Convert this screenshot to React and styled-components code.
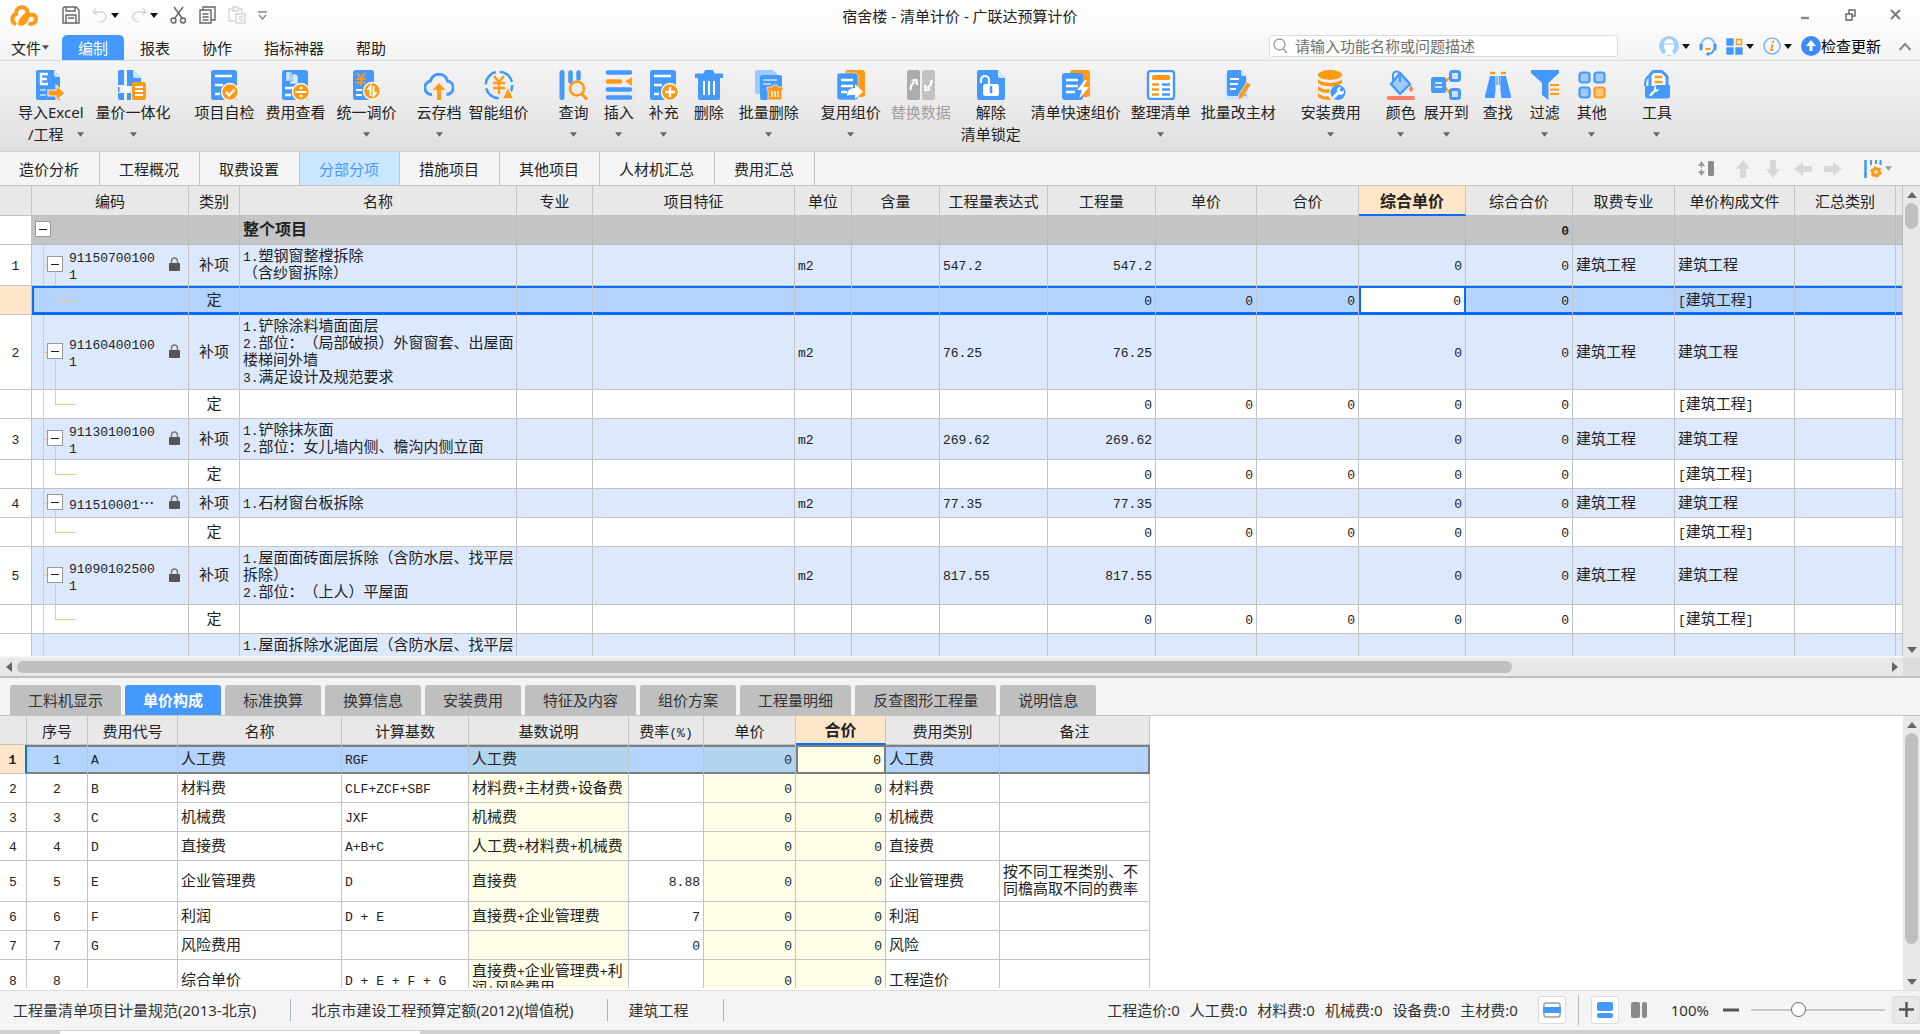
import React from 'react';
import styled, { createGlobalStyle, css } from 'styled-components';

const BLUE = '#4499ff';
const ORANGE = '#ff9a17';
const LINE = '#c4c4c4';
const UI_FONT = '"Noto Sans", "Noto Sans CJK SC", sans-serif';
const GRID_FONT = '"Noto Sans CJK SC", sans-serif';

// ---------- 图标 ----------

const ribbonIcons = {
  importExcel: (
    <>
      <path d='M2 0h16l6 7v23H2a2 2 0 0 1-2-2V2a2 2 0 0 1 2-2z' fill={BLUE} />
      <path d='M18 0v5a2 2 0 0 0 2 2h4z' fill='#cfe5ff' />
      <path d='M12 4H5v10h7M5 9h6' stroke='#fff' strokeWidth='2.4' fill='none' />
      <path d='M4 20h6M4 25h6' stroke='#a9d0ff' strokeWidth='2' />
      <path d='M12 20h8v-5l9 8-9 8v-5h-8z' fill={ORANGE} stroke='#eee' strokeWidth='1.2' />
    </>
  ),
  integrate: (
    <>
      <path d='M2 0h4v15H0V2a2 2 0 0 1 2-2zM9 0h6l8 8v5h-8v3H9z' fill={BLUE} />
      <path d='M15 0v6a2 2 0 0 0 2 2h6z' fill='#cfe5ff' />
      <path d='M0 23h6v7H2a2 2 0 0 1-2-2zM9 23h4v7H9z' fill={BLUE} />
      <path d='M5 17h6v6H5z' fill='#fff' />
      <path d='M0 17v5' stroke={BLUE} strokeWidth='3' />
      <rect x='14' y='12' width='14' height='18' rx='2' fill={ORANGE} />
      <path d='M17 17h8M17 21h8M17 25h8' stroke='#fff' strokeWidth='2' />
    </>
  ),
  check: (
    <>
      <rect x='1' width='26' height='30' rx='2.5' fill={BLUE} />
      <path d='M5 6h17M5 15h8M5 24h5' stroke='#fff' strokeWidth='2.4' />
      <circle cx='20' cy='22' r='8.5' fill={ORANGE} stroke='#fff' strokeWidth='1.4' />
      <path d='M16 22l3 3.5 5.5-6' stroke='#fff' strokeWidth='2.4' fill='none' />
    </>
  ),
  feeView: (
    <>
      <rect x='1' width='26' height='30' rx='2.5' fill={BLUE} />
      <path d='M5 2h6v9H5zM9 4h6l2 2v8H9z' fill='#d8eaff' stroke={BLUE} strokeWidth='.6' />
      <path d='M4 18h8M4 25h6' stroke='#fff' strokeWidth='2.4' />
      <circle cx='20' cy='22' r='8.5' fill={ORANGE} stroke='#fff' strokeWidth='1.4' />
      <path d='M14.5 22h11' stroke='#fff' strokeWidth='2' />
      <circle cx='20' cy='18' r='1.5' fill='#fff' />
      <circle cx='20' cy='26' r='1.5' fill='#fff' />
    </>
  ),
  adjust: (
    <>
      <rect x='1' width='21' height='30' rx='2.5' fill={BLUE} />
      <path d='M5 3l4 5 4-5M9 8v8M4.500 9h9M4.500 12.500h9' stroke={ORANGE} strokeWidth='1.8' fill='none' />
      <path d='M4 20h6M4 25h6' stroke='#fff' strokeWidth='2.2' />
      <circle cx='20' cy='21' r='8.5' fill={ORANGE} stroke='#fff' strokeWidth='1.4' />
      <path d='M18.500 26v-10l-3 4M21.500 16v10l3-4' stroke='#fff' strokeWidth='1.9' fill='none' />
    </>
  ),
  cloud: (
    <>
      <path
        d='M8 24.500A6.800 6.800 0 0 1 6.500 11 8.700 8.700 0 0 1 23.500 11 6.800 6.800 0 0 1 22.500 24.500'
        stroke={BLUE}
        strokeWidth='3'
        fill='none'
      />
      <path d='M15 13l6.500 7h-4.500v10h-4V20H8.500z' fill={ORANGE} />
    </>
  ),
  smart: (
    <>
      <circle cx='15' cy='15' r='13.300' stroke={BLUE} strokeWidth='2.600' fill='none' strokeDasharray='17 4' />
      <path d='M10 6l5 6 5-6M15 12v12M9 13h12M9 18h12' stroke={ORANGE} strokeWidth='2.400' fill='none' />
      <path d='M24 17l6 12H18z' fill={ORANGE} stroke='#eee' strokeWidth='1.500' />
    </>
  ),
  query: (
    <>
      <path d='M3 2.500v25' stroke={BLUE} strokeWidth='5' strokeLinecap='round' />
      <path d='M11.500 2.500v9M19.500 2.500v6' stroke={BLUE} strokeWidth='4.500' strokeLinecap='round' />
      <circle cx='18' cy='18.500' r='7' stroke={ORANGE} strokeWidth='2.600' fill='#ececec' />
      <path d='M22.500 23.500l5.500 6' stroke={ORANGE} strokeWidth='3' />
    </>
  ),
  insert: (
    <>
      <path d='M4 2.500h22M4 19.500h22M4 27.500h22' stroke={BLUE} strokeWidth='4.600' strokeLinecap='round' />
      <path d='M4 11.500h12' stroke={ORANGE} strokeWidth='4.400' strokeLinecap='round' />
      <path d='M28 7v9l-7-4.500z' fill={ORANGE} />
    </>
  ),
  supplement: (
    <>
      <rect x='1' width='26' height='30' rx='2.500' fill={BLUE} />
      <path d='M5 6h17M5 15h8M5 24h5' stroke='#fff' strokeWidth='2.400' />
      <circle cx='21' cy='22' r='8.500' fill={ORANGE} stroke='#fff' strokeWidth='1.400' />
      <path d='M16 22h10M21 17v10' stroke='#fff' strokeWidth='2.400' />
    </>
  ),
  remove: (
    <>
      <path d='M1 3.500h8.500L11 0h8l1.500 3.500H29v4.500H1z' fill={BLUE} />
      <path d='M4 8h22v20a2 2 0 0 1-2 2H6a2 2 0 0 1-2-2z' fill={BLUE} />
      <path d='M10 11v14M15 11v14M20 11v14' stroke='#fff' strokeWidth='2' />
    </>
  ),
  batchRemove: (
    <>
      <path d='M3 0h16l4 4v20H3a2 2 0 0 1-2-2V2a2 2 0 0 1 2-2z' fill='#9fcaff' />
      <rect x='6' y='5' width='22' height='25' rx='2.500' fill={BLUE} />
      <path d='M9 10h14M9 14h8' stroke='#a9d0ff' strokeWidth='1.800' />
      <path d='M13 17h5l1-2h4l1 2h5v3h-1v10H14V20h-1z' fill={ORANGE} stroke='#eee' strokeWidth='.8' />
      <path d='M18 21v6M21 21v6M24 21v6' stroke='#fff' strokeWidth='1.300' />
    </>
  ),
  reuse: (
    <>
      <rect x='9' width='20' height='27' rx='3' fill={ORANGE} />
      <rect x='1' y='3' width='21' height='27' rx='3' fill={BLUE} stroke='#eee' strokeWidth='.6' />
      <path d='M5 10h12M5 16h12M5 22h6' stroke='#fff' strokeWidth='2.400' />
      <path d='M11 26c0-6 3-8 8-8v-4l8 7.500-8 7.500v-4c-3 0-6-.500-8 1z' fill='#fff' />
    </>
  ),
  replace: (
    <>
      <rect x='1' width='13' height='30' rx='2.500' fill='#acacac' />
      <rect x='16' width='13' height='30' rx='2.500' fill='#c2c2c2' />
      <path
        d='M4.500 20c0-4 1-6 4-8M5.500 10.500l5-.500.500 5M25.500 10c0 4-1 6-4 8M24.500 19.500l-5 .500-.500-5'
        stroke='#fff'
        strokeWidth='2.200'
        fill='none'
      />
    </>
  ),
  unlock: (
    <>
      <path d='M3 0h19l7 8v20a2 2 0 0 1-2 2H3a2 2 0 0 1-2-2V2a2 2 0 0 1 2-2z' fill={BLUE} />
      <path d='M22 0v6a2 2 0 0 0 2 2h5z' fill='#d8eaff' />
      <path d='M5 13v-3a4 4 0 0 1 8 0v5' stroke='#fff' strokeWidth='2.200' fill='none' />
      <rect x='7' y='14' width='16' height='12' rx='2.500' fill='#fff' />
      <path d='M15 17v5' stroke={BLUE} strokeWidth='2.600' strokeLinecap='round' />
    </>
  ),
  quick: (
    <>
      <rect x='9' width='20' height='27' rx='3' fill={ORANGE} />
      <rect x='1' y='3' width='21' height='27' rx='3' fill={BLUE} />
      <path d='M5 10h12M5 16h12M5 22h9' stroke='#fff' strokeWidth='2.400' />
      <path d='M24 10l-8 10h5l-3 9 10-12h-6l4-7z' fill='#fff' />
    </>
  ),
  arrange: (
    <>
      <rect x='2' y='1' width='26' height='28' rx='2.500' stroke={BLUE} strokeWidth='2.400' fill='#fff' />
      <rect x='6' y='5' width='18' height='5' rx='1.500' fill={ORANGE} />
      <path d='M6 14.500h7M6 19.500h7M6 24.500h7' stroke={ORANGE} strokeWidth='2.600' />
      <path d='M16 14.500h8M16 19.500h8M16 24.500h8' stroke={BLUE} strokeWidth='2.600' />
    </>
  ),
  material: (
    <>
      <path d='M2 4v24a2 2 0 0 0 2 2h17l4-3V8z' fill='#cfe5ff' />
      <path d='M6 0h12l5 6v20H6a2 2 0 0 1-2-2V2a2 2 0 0 1 2-2z' fill={BLUE} />
      <path d='M18 0v4a2 2 0 0 0 2 2h3z' fill='#cfe5ff' />
      <path d='M7 9h9M7 14h8M7 19h6' stroke='#fff' strokeWidth='2' />
      <path d='M24 12l4 2.500L19.500 28l-4.500 2 .5-5z' fill={ORANGE} stroke='#eee' strokeWidth='.8' />
    </>
  ),
  install: (
    <>
      <ellipse cx='14' cy='5' rx='12' ry='5' fill={ORANGE} />
      <path
        d='M2 9c4 5 20 5 24 0v4c-4 5-20 4-24 0zM2 16c3 3 8 4 12 3l-1 4c-5 0-9-1-11-3zM2 23c3 3 7 4 10 3l3 4C9 30 4 29 2 27z'
        fill={ORANGE}
      />
      <circle cx='22' cy='22.500' r='7.500' fill={BLUE} />
      <path d='M18 27l4.500-4.500' stroke='#fff' strokeWidth='3' strokeLinecap='round' />
      <path d='M21 21a3.500 3.500 0 0 1 4-4l-1.500 3 2.500 2 2-2a4 4 0 0 1-4 5z' fill='#fff' />
    </>
  ),
  color: (
    <>
      <path d='M14 3l10 11-10 10L5 14z' fill='#9fcaff' stroke={BLUE} strokeWidth='2.400' strokeLinejoin='round' />
      <path d='M7 11V5a3.500 3.500 0 0 1 7 0v7' stroke={BLUE} strokeWidth='2' fill='none' />
      <path d='M25 15c1.500 2.500 2 3.500 2 4.500a2 2 0 0 1-4 0c0-1 .5-2 2-4.500z' fill='#fb8064' />
      <rect x='1' y='26' width='28' height='4' rx='1.500' fill='#fb8064' />
    </>
  ),
  expand: (
    <>
      <path d='M13 13l6-6M13 16l6 7' stroke={ORANGE} strokeWidth='2' />
      <rect x='0' y='7' width='15' height='16' rx='2.500' fill={BLUE} />
      <path d='M4 13h7M4 17h7' stroke='#cfe5ff' strokeWidth='1.800' />
      <rect x='19.500' y='1.500' width='9' height='9' rx='2' fill='#cfe5ff' stroke={BLUE} strokeWidth='3' />
      <rect x='19.500' y='19.500' width='9' height='9' rx='2' fill='#cfe5ff' stroke={BLUE} strokeWidth='3' />
    </>
  ),
  find: (
    <>
      <path d='M7 3h5M18 3h5' stroke={ORANGE} strokeWidth='2.400' />
      <path d='M7 6h5.500v15l-1 7H3c-1 0-1.500-1-1-2zM23 6h-5.500v15l1 7H27c1 0 1.500-1 1-2z' fill={BLUE} />
      <path d='M14 6v9M16.500 6v9' stroke={BLUE} strokeWidth='1.200' />
    </>
  ),
  filter: (
    <>
      <path d='M1 0h28v3L18.500 13v17L12 25V13L1 3z' fill={BLUE} />
      <path d='M20 15h9M20 19.500h9M20 24h9' stroke={ORANGE} strokeWidth='2.200' />
    </>
  ),
  other: (
    <>
      <rect x='2.500' y='2.500' width='10' height='10' rx='2.500' fill='#9fcaff' stroke={BLUE} strokeWidth='2.200' />
      <rect x='17.500' y='2.500' width='10' height='10' rx='2.500' fill='#9fcaff' stroke={BLUE} strokeWidth='2.200' />
      <rect x='2.500' y='17.500' width='10' height='10' rx='2.500' fill='#9fcaff' stroke={BLUE} strokeWidth='2.200' />
      <rect x='17.500' y='17.500' width='10' height='10' rx='2.500' fill='#ffc67c' stroke={ORANGE} strokeWidth='2.200' />
    </>
  ),
  tool: (
    <>
      <path d='M11 1.500h9l5 5V18H8V5z' fill='#fff' stroke={BLUE} strokeWidth='3' strokeLinejoin='round' />
      <path d='M12.500 7h8M12.500 12h8' stroke={ORANGE} strokeWidth='2.400' />
      <path d='M7 6C3 8 3 12 3 16' stroke={BLUE} strokeWidth='2' fill='none' />
      <path d='M3 16h9l3-1h13v11a2.500 2.500 0 0 1-2.500 2.500h-20A2.500 2.500 0 0 1 3 26z' fill={BLUE} />
      <path d='M7 25l5-5a3 3 0 0 1 2-4v3l2 1 1-2a3.500 3.500 0 0 1-4 4l-4 4.500z' fill='#fff' />
    </>
  ),
};

const Caret = ({ color = '#111', size = 8 }) => (
  <svg width={size} height='5' viewBox='0 0 8 5' aria-hidden='true'>
    <path d='M0 0h8L4 5z' fill={color} />
  </svg>
);

const Logo = () => (
  <svg width='28' height='21' viewBox='0 0 28 21' aria-hidden='true'>
    <path
      d='M4.500 18.500a5.500 5.500 0 0 1 1.500-9.500C5.500 1 16 0 17.500 6.500c1 4-6.500 5-7.500 12M12 18.500c4-1 4.500-4 5-6 1-4 9-4 9 1.500 0 3-2.500 5-6 5'
      stroke={ORANGE}
      strokeWidth='4'
      fill='none'
      strokeLinecap='round'
    />
  </svg>
);

const LockIcon = () => (
  <svg width='11' height='14' viewBox='0 0 11 14' aria-hidden='true'>
    <path d='M2.500 7V4a3 3 0 0 1 6 0v3' stroke='#777' strokeWidth='1.400' fill='none' />
    <rect y='6' width='11' height='8' rx='1' fill='#555' />
  </svg>
);

const QuickIcon = ({ name, width }) => (
  <svg
    width={width}
    height='18'
    viewBox={`0 0 ${width} 18`}
    fill='none'
    stroke='#666'
    strokeWidth='1.400'
    aria-hidden='true'
  >
    {name === 'save' && <path d='M1 3a2 2 0 0 1 2-2h11l3 3v13H1zM4 1v4h9V1M4 17V9h10v8M6 12h6' />}
    {name === 'undo' && <path d='M4 2L1 6l4 3M1 6h8c7 0 7 9-1 10' stroke='#d5d5d5' />}
    {name === 'redo' && <path d='M12 2l3 4-4 3M15 6H7C0 6 0 15 8 16' stroke='#d5d5d5' />}
    {name === 'cut' && (
      <>
        <path d='M4 1l8 11M13 1L5 12' />
        <circle cx='3.500' cy='14.500' r='2.500' />
        <circle cx='13' cy='14.500' r='2.500' />
      </>
    )}
    {name === 'copy' && <path d='M1 4h11v13H1zM4 4V1h12v13h-4M3.500 8h6M3.500 11h6M3.500 14h6' />}
    {name === 'paste' && <path d='M8 15H1V3h3M11 3h3v4M5 1h5v4H5zM8 8h9v9H8zM11 11h4M11 14h4' stroke='#d5d5d5' />}
    {name === 'more' && <path d='M0 6h9M1 9l3.500 4L8 9' stroke='#888' />}
  </svg>
);

const ArrowIcon = ({ turn }) => (
  <svg width='20' height='20' viewBox='0 0 20 20' aria-hidden='true'>
    <path d='M10 1l7 9h-4v9H7v-9H3z' fill='#d8d8d8' transform={`rotate(${turn} 10 10)`} />
  </svg>
);

// ---------- 数据 ----------

const ribbonGroups = [
  {
    gap: 12,
    items: [
      { icon: 'importExcel', label: '导入Excel', second: '/工程', drop: true },
      { icon: 'integrate', label: '量价一体化', drop: true },
    ],
  },
  {
    before: 24,
    gap: 11,
    items: [
      { icon: 'check', label: '项目自检' },
      { icon: 'feeView', label: '费用查看' },
      { icon: 'adjust', label: '统一调价', drop: true },
    ],
  },
  {
    before: 20,
    gap: 7,
    items: [
      { icon: 'cloud', label: '云存档', drop: true },
      { icon: 'smart', label: '智能组价' },
    ],
  },
  {
    before: 30,
    gap: 15,
    items: [
      { icon: 'query', label: '查询', drop: true },
      { icon: 'insert', label: '插入', drop: true },
      { icon: 'supplement', label: '补充', drop: true },
      { icon: 'remove', label: '删除' },
      { icon: 'batchRemove', label: '批量删除', drop: true },
    ],
  },
  {
    before: 22,
    gap: 10,
    items: [
      { icon: 'reuse', label: '复用组价', drop: true },
      { icon: 'replace', label: '替换数据', disabled: true },
      { icon: 'unlock', label: '解除', second: '清单锁定' },
      { icon: 'quick', label: '清单快速组价' },
      { icon: 'arrange', label: '整理清单', drop: true },
      { icon: 'material', label: '批量改主材' },
    ],
  },
  { before: 25, items: [{ icon: 'install', label: '安装费用', drop: true }] },
  {
    before: 25,
    gap: 8,
    items: [
      { icon: 'color', label: '颜色', drop: true },
      { icon: 'expand', label: '展开到', drop: true },
    ],
  },
  {
    before: 14,
    gap: 17,
    items: [
      { icon: 'find', label: '查找' },
      { icon: 'filter', label: '过滤', drop: true },
      { icon: 'other', label: '其他', drop: true },
    ],
  },
  { before: 35, items: [{ icon: 'tool', label: '工具', drop: true }] },
];

const menus = ['编制', '报表', '协作', '指标神器', '帮助'];
const sections = ['造价分析', '工程概况', '取费设置', '分部分项', '措施项目', '其他项目', '人材机汇总', '费用汇总'];

const mainColumns = [
  { width: 32, title: '' },
  { width: 157, title: '编码' },
  { width: 51, title: '类别' },
  { width: 277, title: '名称' },
  { width: 76, title: '专业' },
  { width: 202, title: '项目特征' },
  { width: 57, title: '单位' },
  { width: 88, title: '含量' },
  { width: 108, title: '工程量表达式' },
  { width: 108, title: '工程量' },
  { width: 101, title: '单价' },
  { width: 102, title: '合价' },
  { width: 107, title: '综合单价', active: true },
  { width: 107, title: '综合合价' },
  { width: 102, title: '取费专业' },
  { width: 120, title: '单价构成文件' },
  { width: 101, title: '汇总类别' },
  { title: '' },
];

const mainItems = [
  { code: '91150700100\n1', name: '1.塑钢窗整樘拆除\n（含纱窗拆除）', amount: '547.2', selected: true },
  {
    code: '91160400100\n1',
    name: '1.铲除涂料墙面面层\n2.部位：（局部破损）外窗窗套、出屋面\n楼梯间外墙\n3.满足设计及规范要求',
    amount: '76.25',
  },
  { code: '91130100100\n1', name: '1.铲除抹灰面\n2.部位：女儿墙内侧、檐沟内侧立面', amount: '269.62' },
  { code: '911510001…', name: '1.石材窗台板拆除', amount: '77.35' },
  {
    code: '91090102500\n1',
    name: '1.屋面面砖面层拆除（含防水层、找平层\n拆除）\n2.部位：（上人）平屋面',
    amount: '817.55',
  },
];

const detailTabs = [
  '工料机显示',
  '单价构成',
  '标准换算',
  '换算信息',
  '安装费用',
  '特征及内容',
  '组价方案',
  '工程量明细',
  '反查图形工程量',
  '说明信息',
];

const feeColumns = [
  { width: 27, title: '' },
  { width: 61, title: '序号' },
  { width: 90, title: '费用代号' },
  { width: 164, title: '名称' },
  { width: 127, title: '计算基数' },
  { width: 160, title: '基数说明' },
  { width: 75, title: '费率(%)' },
  { width: 92, title: '单价' },
  { width: 90, title: '合价', active: true },
  { width: 114, title: '费用类别' },
  { width: 150, title: '备注' },
];

const fees = [
  { code: 'A', name: '人工费', base: 'RGF', desc: '人工费', type: '人工费' },
  { code: 'B', name: '材料费', base: 'CLF+ZCF+SBF', desc: '材料费+主材费+设备费', type: '材料费' },
  { code: 'C', name: '机械费', base: 'JXF', desc: '机械费', type: '机械费' },
  { code: 'D', name: '直接费', base: 'A+B+C', desc: '人工费+材料费+机械费', type: '直接费' },
  {
    code: 'E',
    name: '企业管理费',
    base: 'D',
    desc: '直接费',
    rate: '8.88',
    type: '企业管理费',
    note: '按不同工程类别、不\n同檐高取不同的费率',
  },
  { code: 'F', name: '利润', base: 'D + E', desc: '直接费+企业管理费', rate: '7', type: '利润' },
  { code: 'G', name: '风险费用', base: '', desc: '', rate: '0', type: '风险' },
  { code: '', name: '综合单价', base: 'D + E + F + G', desc: '直接费+企业管理费+利\n润+风险费用', type: '工程造价' },
];

const totals = ['工程造价:0', '人工费:0', '材料费:0', '机械费:0', '设备费:0', '主材费:0'];

// ---------- 组件 ----------

// 表格里的数字和字母用等宽字体
const GridText = ({ children }) =>
  String(children ?? '')
    .split(/([\x20-\x7e]+)/)
    .map((part, i) => (i % 2 ? <Mono key={i}>{part}</Mono> : part));

const ScrollBar = ({ vertical, size }) => (
  <ScrollTrack $vertical={vertical}>
    <ScrollArrow aria-label={vertical ? '向上' : '向左'}>
      <svg width='10' height='10' viewBox='0 0 10 10'>
        <path d={vertical ? 'M5 2l5 6H0z' : 'M2 5l6-5v10z'} fill='#666' />
      </svg>
    </ScrollArrow>
    <ScrollRail $vertical={vertical}>
      <ScrollThumb $vertical={vertical} $size={size} />
    </ScrollRail>
    <ScrollArrow aria-label={vertical ? '向下' : '向右'}>
      <svg width='10' height='10' viewBox='0 0 10 10'>
        <path d={vertical ? 'M5 8l5-6H0z' : 'M8 5L2 0v10z'} fill='#666' />
      </svg>
    </ScrollArrow>
  </ScrollTrack>
);

function TableHead({ columns, height }) {
  return (
    <>
      <colgroup>
        {columns.map((c, i) => (
          <col key={i} width={c.width} />
        ))}
      </colgroup>
      <thead>
        <tr>
          {columns.map((c, i) => (
            <HeadCell key={i} $active={c.active} $height={height} scope='col'>
              <GridText>{c.title}</GridText>
            </HeadCell>
          ))}
        </tr>
      </thead>
    </>
  );
}

function Header() {
  return (
    <header>
      <TitleBar>
        <QuickBar>
          <LogoBox>
            <Logo />
          </LogoBox>
          <PlainButton aria-label='保存'>
            <QuickIcon name='save' width={18} />
          </PlainButton>
          <PlainButton aria-label='撤销'>
            <QuickIcon name='undo' width={16} />
            <Caret />
          </PlainButton>
          <PlainButton aria-label='恢复'>
            <QuickIcon name='redo' width={16} />
            <Caret />
          </PlainButton>
          <PlainButton aria-label='剪切'>
            <QuickIcon name='cut' width={17} />
          </PlainButton>
          <PlainButton aria-label='复制'>
            <QuickIcon name='copy' width={17} />
          </PlainButton>
          <PlainButton aria-label='粘贴'>
            <QuickIcon name='paste' width={18} />
          </PlainButton>
          <PlainButton aria-label='自定义'>
            <QuickIcon name='more' width={9} />
          </PlainButton>
        </QuickBar>
        <Title>宿舍楼 - 清单计价 - 广联达预算计价</Title>
        <WindowButtons>
          <WindowButton aria-label='最小化'>
            <svg width='11' height='12' viewBox='0 0 11 12'>
              <path d='M1 9h8' stroke='#888' strokeWidth='2.400' />
            </svg>
          </WindowButton>
          <WindowButton aria-label='还原'>
            <svg width='11' height='12' viewBox='0 0 11 12' fill='none' stroke='#666' strokeWidth='1.400'>
              <path d='M1 5h6v6H1zM4 5V1h6v6H7' />
            </svg>
          </WindowButton>
          <WindowButton aria-label='关闭'>
            <svg width='11' height='12' viewBox='0 0 11 12'>
              <path d='M1 1l9 9M10 1l-9 9' stroke='#777' strokeWidth='1.800' />
            </svg>
          </WindowButton>
        </WindowButtons>
      </TitleBar>
      <MenuBar>
        <FileMenu>
          文件
          <Caret color='#555' size={7} />
        </FileMenu>
        {menus.map((m) => (
          <MenuTab key={m} $active={m === '编制'}>
            {m}
          </MenuTab>
        ))}
        <SearchBox>
          <svg width='15' height='16' viewBox='0 0 15 16' fill='none' stroke='#999' strokeWidth='1.300'>
            <circle cx='6.500' cy='6.500' r='5.500' />
            <path d='M10.500 11l3.500 4' />
          </svg>
          <SearchInput type='text' aria-label='搜索' placeholder='请输入功能名称或问题描述' />
        </SearchBox>
        <UserTools>
          <PlainButton aria-label='用户'>
            <svg width='20' height='20' viewBox='0 0 20 20'>
              <circle cx='10' cy='10' r='10' fill='#9fd0fb' />
              <path d='M5 8a5 5 0 0 1 10 0v4l-2 3 2 4H5l2-4-2-3z' fill='#fff' />
              <path d='M4 8h12' stroke='#9fd0fb' strokeWidth='1.200' />
            </svg>
            <Caret />
          </PlainButton>
          <PlainButton aria-label='客服'>
            <svg width='18' height='19' viewBox='0 0 18 19' fill='none'>
              <path d='M2.500 8a6.500 7 0 0 1 13 0' stroke='#8cc2fb' strokeWidth='2' />
              <path d='M2 8v4M16 8v4' stroke={BLUE} strokeWidth='3.200' strokeLinecap='round' />
              <path d='M15 12c-1 4-3 5-6 5' stroke={BLUE} strokeWidth='1.800' />
              <circle cx='9' cy='17' r='1.800' fill={BLUE} />
              <path d='M6.500 12h5' stroke={ORANGE} strokeWidth='2' />
            </svg>
          </PlainButton>
          <PlainButton aria-label='应用'>
            <svg width='17' height='17' viewBox='0 0 17 17'>
              <path
                d='M1 1h6v6H1zM1 10h6v6H1zM10 10h6v6h-6z'
                fill={BLUE}
                stroke={BLUE}
                strokeWidth='1.400'
                strokeLinejoin='round'
              />
              <rect x='10.500' y='1.500' width='5' height='5' stroke={ORANGE} strokeWidth='1.600' fill='#fff' />
            </svg>
            <Caret />
          </PlainButton>
          <PlainButton aria-label='信息'>
            <svg width='18' height='18' viewBox='0 0 18 18' fill='none'>
              <circle cx='9' cy='9' r='8' stroke='#7db9fb' strokeWidth='1.600' />
              <path d='M9.500 7.500l-1.300 5.500h1.800M8 8h1.500' stroke={ORANGE} strokeWidth='1.800' />
              <circle cx='10' cy='4.800' r='1.200' fill={ORANGE} />
            </svg>
            <Caret />
          </PlainButton>
          <UpdateButton>
            <svg width='20' height='20' viewBox='0 0 20 20'>
              <circle cx='10' cy='10' r='10' fill='#3b8bff' />
              <path d='M10 4l5 6h-3.500v5h-3v-5H5z' fill='#fff' />
            </svg>
            检查更新
          </UpdateButton>
          <PlainButton aria-label='收起功能区'>
            <svg width='14' height='9' viewBox='0 0 14 9' fill='none'>
              <path d='M1.500 8L7 2l5.500 6' stroke='#888' strokeWidth='2' />
            </svg>
          </PlainButton>
        </UserTools>
      </MenuBar>
      <Ribbon>
        {ribbonGroups.map((group, i) => (
          <RibbonGroup key={i} $gap={group.gap} $before={group.before}>
            {group.items.map((item) => (
              <RibbonButton key={item.label} disabled={item.disabled}>
                <svg width='30' height='30' viewBox='0 0 30 30' aria-hidden='true'>
                  {ribbonIcons[item.icon]}
                </svg>
                <RibbonLabel>{item.label}</RibbonLabel>
                <RibbonSecond $split={item.second && item.drop}>
                  {item.second}
                  {item.drop && <Caret color='#666' size={7} />}
                </RibbonSecond>
              </RibbonButton>
            ))}
          </RibbonGroup>
        ))}
      </Ribbon>
    </header>
  );
}

function SectionBar() {
  return (
    <Sections>
      {sections.map((s) => (
        <SectionTab key={s} $active={s === '分部分项'}>
          {s}
        </SectionTab>
      ))}
      <SectionTools>
        <PlainButton aria-label='行高'>
          <svg width='17' height='17' viewBox='0 0 17 17'>
            <path d='M0 6l3.500-5L7 6zM0 11l3.500 5L7 11z' fill='#999' />
            <path d='M3.500 6v5' stroke='#999' strokeDasharray='2 1' />
            <rect x='10' y='1' width='6' height='15' rx='1.500' fill='#8a8a8a' />
          </svg>
        </PlainButton>
        <ArrowGroup>
          <PlainButton aria-label='上移'>
            <ArrowIcon turn={0} />
          </PlainButton>
          <PlainButton aria-label='下移'>
            <ArrowIcon turn={180} />
          </PlainButton>
          <PlainButton aria-label='左移'>
            <ArrowIcon turn={270} />
          </PlainButton>
          <PlainButton aria-label='右移'>
            <ArrowIcon turn={90} />
          </PlainButton>
        </ArrowGroup>
        <PlainButton aria-label='列设置'>
          <svg width='18' height='20' viewBox='0 0 18 20'>
            <path d='M1.500 1v18' stroke={BLUE} strokeWidth='2.600' />
            <path d='M7 1v5M12 1v4M16.500 1v5' stroke={BLUE} strokeWidth='2' />
            <circle cx='12' cy='13' r='3.300' stroke={ORANGE} strokeWidth='3' fill='none' />
            <circle cx='12' cy='13' r='5' stroke={ORANGE} strokeWidth='1.600' strokeDasharray='2.600 2.600' fill='none' />
          </svg>
          <Caret color='#999' size={7} />
        </PlainButton>
      </SectionTools>
    </Sections>
  );
}

function MainGrid() {
  return (
    <MainPane>
      <GridRow>
        <GridView>
          <Table $full>
            <TableHead columns={mainColumns} height={30} />
            <tbody>
              <Row $kind='root'>
                <NumberCell />
                <TreeCell $tree='root'>
                  <CodeBox $root>
                    <Toggle aria-label='折叠' />
                  </CodeBox>
                </TreeCell>
                <Cell />
                <Cell>整个项目</Cell>
                {mainColumns.slice(4).map((c, i) => (
                  <Cell key={i} $right>
                    {c.title === '综合合价' && <BoldNumber>0</BoldNumber>}
                  </Cell>
                ))}
              </Row>
              {mainItems.map((item, i) => (
                <React.Fragment key={item.code}>
                  <Row $kind='item'>
                    <NumberCell>
                      <Mono>{i + 1}</Mono>
                    </NumberCell>
                    <TreeCell $tree='item'>
                      <CodeBox>
                        <Toggle aria-label='折叠' />
                        <Code>
                          <GridText>{item.code}</GridText>
                        </Code>
                        <LockIcon />
                      </CodeBox>
                    </TreeCell>
                    <Cell $center>补项</Cell>
                    <Cell>
                      <GridText>{item.name}</GridText>
                    </Cell>
                    <Cell />
                    <Cell />
                    <Cell>
                      <Mono>m2</Mono>
                    </Cell>
                    <Cell />
                    <Cell>
                      <Mono>{item.amount}</Mono>
                    </Cell>
                    <Cell $right>
                      <Mono>{item.amount}</Mono>
                    </Cell>
                    <Cell />
                    <Cell />
                    <Cell $right>
                      <Mono>0</Mono>
                    </Cell>
                    <Cell $right>
                      <Mono>0</Mono>
                    </Cell>
                    <Cell>建筑工程</Cell>
                    <Cell>建筑工程</Cell>
                    <Cell />
                    <Cell />
                  </Row>
                  <Row $kind={item.selected ? 'selected' : 'quota'}>
                    <NumberCell $current={item.selected} />
                    <TreeCell $tree='leaf' />
                    <Cell $center>定</Cell>
                    <Cell />
                    <Cell />
                    <Cell />
                    <Cell />
                    <Cell />
                    <Cell />
                    <Cell $right>
                      <Mono>0</Mono>
                    </Cell>
                    <Cell $right>
                      <Mono>0</Mono>
                    </Cell>
                    <Cell $right>
                      <Mono>0</Mono>
                    </Cell>
                    <Cell $right>
                      <Mono>0</Mono>
                    </Cell>
                    <Cell $right>
                      <Mono>0</Mono>
                    </Cell>
                    <Cell />
                    <Cell>
                      <GridText>[建筑工程]</GridText>
                    </Cell>
                    <Cell />
                    <Cell />
                  </Row>
                </React.Fragment>
              ))}
              <Row $kind='item' $tall>
                <NumberCell />
                <TreeCell $tree='item' />
                <Cell />
                <Cell>
                  <GridText>1.屋面拆除水泥面层（含防水层、找平层</GridText>
                </Cell>
                {mainColumns.slice(4).map((c, i) => (
                  <Cell key={i} />
                ))}
              </Row>
            </tbody>
          </Table>
        </GridView>
        <ScrollBar vertical size={6} />
      </GridRow>
      <BottomScroll>
        <ScrollBar size={80} />
        <ScrollCorner />
      </BottomScroll>
    </MainPane>
  );
}

function DetailPane() {
  return (
    <section>
      <DetailTabs>
        {detailTabs.map((t) => (
          <DetailTab key={t} $active={t === '单价构成'}>
            {t}
          </DetailTab>
        ))}
      </DetailTabs>
      <DetailBody>
        <GridView>
          <Table>
            <TableHead columns={feeColumns} height={29} />
            <tbody>
              {fees.map((fee, i) => (
                <Row key={fee.name} $kind={i === 0 ? 'current' : 'quota'}>
                  <NumberCell $current={i === 0} $bold={i === 0}>
                    <Mono>{i + 1}</Mono>
                  </NumberCell>
                  <Cell $center>
                    <Mono>{i + 1}</Mono>
                  </Cell>
                  <Cell>
                    <Mono>{fee.code}</Mono>
                  </Cell>
                  <Cell>{fee.name}</Cell>
                  <Cell>
                    <Mono>{fee.base}</Mono>
                  </Cell>
                  <Cell $calc>
                    <GridText>{fee.desc}</GridText>
                  </Cell>
                  <Cell $right>
                    <Mono>{fee.rate}</Mono>
                  </Cell>
                  <Cell $right $calc>
                    <Mono>0</Mono>
                  </Cell>
                  <Cell $right $calc>
                    <Mono>0</Mono>
                  </Cell>
                  <Cell>{fee.type}</Cell>
                  <Cell>{fee.note}</Cell>
                </Row>
              ))}
            </tbody>
          </Table>
        </GridView>
        <ScrollBar vertical size={88} />
      </DetailBody>
    </section>
  );
}

function StatusBar() {
  return (
    <Status>
      <StatusText>工程量清单项目计量规范(2013-北京)</StatusText>
      <StatusText>北京市建设工程预算定额(2012)(增值税)</StatusText>
      <StatusText>建筑工程</StatusText>
      <Totals>
        {totals.map((t) => (
          <span key={t}>{t}</span>
        ))}
      </Totals>
      <ViewButton aria-label='整行显示' $on>
        <svg width='18' height='16' viewBox='0 0 18 16'>
          <rect x='1' y='1' width='16' height='14' rx='2' stroke='#9a9a9a' strokeWidth='1.400' fill='#fff' />
          <path d='M0 5h18v6H0z' fill={BLUE} />
        </svg>
      </ViewButton>
      <Divider />
      <LayoutButtons>
        <ViewButton aria-label='上下布局' $on>
          <svg width='16' height='16' viewBox='0 0 16 16' fill={BLUE}>
            <rect width='16' height='9' rx='2' />
            <rect y='11' width='16' height='5' rx='2' />
          </svg>
        </ViewButton>
        <ViewButton aria-label='左右布局'>
          <svg width='16' height='16' viewBox='0 0 16 16' fill='#8a8a8a'>
            <rect width='9' height='16' rx='2' />
            <rect x='11' width='5' height='16' rx='2' />
          </svg>
        </ViewButton>
      </LayoutButtons>
      <Percent>100%</Percent>
      <PlainButton aria-label='缩小'>
        <svg width='16' height='4' viewBox='0 0 16 4'>
          <path d='M0 2h16' stroke='#555' strokeWidth='3' />
        </svg>
      </PlainButton>
      <ZoomSlider type='range' aria-label='缩放' min='0' max='100' defaultValue='34' />
      <ZoomIn aria-label='放大'>
        <svg width='15' height='15' viewBox='0 0 15 15'>
          <path d='M0 7.500h15M7.500 0v15' stroke='#555' strokeWidth='2.400' />
        </svg>
      </ZoomIn>
    </Status>
  );
}

export default function App() {
  return (
    <Page lang='zh-CN'>
      <GlobalStyle />
      <Header />
      <SectionBar />
      <MainGrid />
      <DetailPane />
      <StatusBar />
      <TaskStrip>
        <TaskWindow />
      </TaskStrip>
    </Page>
  );
}

// ---------- 样式 ----------

const GlobalStyle = createGlobalStyle`
  * {
    box-sizing: border-box;
  }
  body {
    margin: 0;
  }
  button, input {
    font: inherit;
    color: inherit;
  }
  svg {
    display: block;
    flex: none;
  }
`;

const Page = styled.div`
  display: flex;
  flex-direction: column;
  height: 100vh;
  overflow: hidden;
  background: #f4f4f4;
  color: #222;
  font-family: ${UI_FONT};
  font-size: 15px;
  line-height: 22px;
  white-space: nowrap;
  text-spacing-trim: space-all;
`;

const PlainButton = styled.button`
  display: flex;
  align-items: center;
  gap: 3px;
  padding: 0;
  border: 0;
  background: none;
`;

const TitleBar = styled.div`
  display: grid;
  grid-template-columns: 1fr auto 1fr;
  height: 30px;
  background: linear-gradient(#ffffff, #fafafa);
`;

const QuickBar = styled.div`
  display: flex;
  align-items: center;
  gap: 12px;
  padding-left: 10px;
`;

const LogoBox = styled.div`
  margin-right: 12px;
`;

const Title = styled.h1`
  margin: 0;
  padding-top: 5px;
  font-size: 15px;
  font-weight: 400;
`;

const WindowButtons = styled.div`
  display: flex;
  justify-content: flex-end;
  padding-right: 2px;
`;

const WindowButton = styled(PlainButton)`
  justify-content: center;
  width: 45px;
`;

const MenuBar = styled.div`
  display: flex;
  align-items: flex-end;
  height: 31px;
  border-bottom: 1px solid #d8d8d8;
  background: linear-gradient(#fafafa, #f3f3f3);
`;

const FileMenu = styled(PlainButton)`
  gap: 1px;
  width: 62px;
  height: 25px;
  padding-left: 11px;
`;

const MenuTab = styled.button`
  height: 25px;
  padding: 0 16px;
  border: 0;
  border-radius: 5px 5px 0 0;
  background: ${(props) => (props.$active ? BLUE : 'none')};
  color: ${(props) => (props.$active ? '#fff' : 'inherit')};
`;

const SearchBox = styled.div`
  display: flex;
  align-items: center;
  gap: 7px;
  width: 349px;
  height: 22px;
  margin: 0 41px 3px auto;
  padding-left: 3px;
  border: 1px solid #dcdcdc;
  border-radius: 3px;
  background: #fff;
`;

const SearchInput = styled.input`
  flex: 1;
  min-width: 0;
  height: 20px;
  padding: 0;
  border: 0;
  outline: 0;
  background: none;

  &::placeholder {
    color: #6e6e6e;
    opacity: 1;
  }
`;

const UserTools = styled.div`
  display: flex;
  align-items: center;
  gap: 9px;
  height: 22px;
  margin-bottom: 3px;
  padding-right: 8px;
`;

const UpdateButton = styled(PlainButton)`
  gap: 0;
  margin-right: 8px;
  color: #000;
`;

const Ribbon = styled.div`
  display: flex;
  height: 91px;
  padding: 9px 0 0 18px;
  border-bottom: 1px solid #d0d0d0;
  background: linear-gradient(#f4f4f4, #e0e0e0);
`;

const RibbonGroup = styled.div`
  display: flex;
  gap: ${(props) => props.$gap || 0}px;
  margin-left: ${(props) => props.$before || 0}px;
`;

const RibbonButton = styled(PlainButton)`
  flex-direction: column;
  gap: 0;
  height: 76px;

  &:disabled {
    color: #a0a0a0;
  }
`;

const RibbonLabel = styled.span`
  margin-top: 1px;
`;

const RibbonSecond = styled.span`
  display: flex;
  align-items: center;
  height: 22px;
  ${(props) =>
    props.$split &&
    css`
      align-self: flex-end;
      gap: 13px;
    `}
`;

const Sections = styled.nav`
  display: flex;
  height: 34px;
  border-bottom: 1px solid ${LINE};
`;

const SectionTab = styled.button`
  padding: 0 20px 0 19px;
  border: 0;
  border-right: 1px solid ${LINE};
  background: ${(props) => (props.$active ? '#cbe7ff' : 'none')};
  color: ${(props) => (props.$active ? BLUE : 'inherit')};
`;

const SectionTools = styled.div`
  display: flex;
  align-items: center;
  gap: 18px;
  margin-left: auto;
  padding-right: 28px;
`;

const ArrowGroup = styled.div`
  display: flex;
  gap: 10px;
  margin-right: 3px;
`;

const MainPane = styled.main`
  display: flex;
  flex: 1;
  flex-direction: column;
  min-height: 0;
  border-bottom: 2px solid #c0c0c0;
`;

const GridRow = styled.div`
  display: flex;
  flex: 1;
  min-height: 0;
`;

const GridView = styled.div`
  flex: 1;
  min-width: 0;
  margin-bottom: 2px;
  overflow: hidden;
  background: #fff;
`;

const Table = styled.table`
  width: ${(props) => (props.$full ? '100%' : '1150px')};
  border-spacing: 0;
  table-layout: fixed;
  font-family: ${GRID_FONT};
  line-height: 17px;
`;

const HeadCell = styled.th`
  height: ${(props) => props.$height}px;
  padding: 0;
  border-right: 1px solid ${LINE};
  border-bottom: 1px solid ${LINE};
  background: #e8e8e8;
  font-weight: 400;

  ${(props) =>
    props.$active &&
    css`
      border-bottom: 2px solid #0a6cff;
      background: #ffe6c8;
      font-size: 16px;
      font-weight: 700;
    `}
`;

const Mono = styled.span`
  font-family: 'Liberation Mono', monospace;
  font-size: 13px;
  line-height: 9px;
  white-space: pre;
`;

const BoldNumber = styled(Mono)`
  font-weight: 700;
`;

const Cell = styled.td`
  height: 29px;
  padding: 1px 3px 5px;
  border-right: 1px solid ${LINE};
  border-bottom: 1px solid ${LINE};
  background-color: ${(props) => (props.$calc ? '#ffffe9' : 'transparent')};
  text-align: ${(props) => (props.$right ? 'right' : props.$center ? 'center' : 'left')};
  white-space: pre;
`;

const NumberCell = styled(Cell)`
  background-color: ${(props) => (props.$current ? '#ffe6c8' : '#fff')};
  font-weight: ${(props) => (props.$bold ? 700 : 400)};
  text-align: center;
`;

// 树形连接线画在单元格背景上
const guide = 'linear-gradient(#ffc27d, #ffc27d) no-repeat';
const treeLines = {
  root: `${guide} 11px 100% / 1px 50%`,
  item: `${guide} 11px 0 / 1px 100%, ${guide} 11px 50% / 8px 1px, ${guide} 23px 100% / 1px 50%`,
  leaf: `${guide} 11px 0 / 1px 100%, ${guide} 23px 0 / 1px 50%, ${guide} 23px 50% / 21px 1px`,
};

const TreeCell = styled(Cell)`
  padding: 2px 0 4px;
  background: ${(props) => treeLines[props.$tree]};
`;

const CodeBox = styled.div`
  display: flex;
  align-items: center;
  gap: 6px;
  padding: ${(props) => (props.$root ? '0 0 0 3px' : '0 8px 0 15px')};
`;

const Code = styled.span`
  flex: 1;
`;

const Toggle = styled.button`
  width: 16px;
  height: 16px;
  padding: 0;
  border: 1px solid #999;
  background: linear-gradient(#222, #222) center / 8px 1px no-repeat #fff;
`;

const rowKinds = {
  root: css`
    background: ${LINE};
    font-size: 16px;
    font-weight: 700;

    ${Cell}:not(${NumberCell}) {
      border-color: #bababa;
    }
  `,
  item: css`
    background: #dce9fd;
  `,
  quota: css`
    background: #fff;
  `,
  selected: css`
    background: #b3d4fe;

    ${Cell}:not(${NumberCell}) {
      border-bottom-color: #0a6cff;
      box-shadow: inset 0 2px #0a6cff, inset 0 -2px #0a6cff;
    }
    ${TreeCell}:not(${NumberCell}) {
      box-shadow: inset 2px 2px #0a6cff, inset 0 -2px #0a6cff;
    }
  `,
  current: css`
    background: #b3d4fe;

    ${Cell}:not(${NumberCell}) {
      border-bottom-color: #7f7f7f;
      box-shadow: inset 0 2px #7f7f7f, inset 0 -1px #7f7f7f;
    }
    ${NumberCell} {
      border-right: 2px solid #0a6cff;
    }
    ${Cell}:last-child {
      border-right: 2px solid #7f7f7f;
    }
  `,
};

const focusColors = { selected: '#0a6cff', current: '#7f7f7f' };

const Row = styled.tr`
  ${(props) => rowKinds[props.$kind]}

  ${(props) =>
    props.$tall &&
    css`
      height: 92px;
      vertical-align: top;
    `}

  ${(props) =>
    focusColors[props.$kind] &&
    css`
      ${Cell}:nth-child(${props.$kind === 'selected' ? 13 : 9}) {
        border-right: 2px solid ${focusColors[props.$kind]};
        border-left: 2px solid ${focusColors[props.$kind]};
        background-color: ${props.$kind === 'selected' ? '#fff' : '#ffffe9'};
      }
    `}

  ${(props) =>
    props.$kind === 'current' &&
    css`
      ${Cell}:nth-child(6), ${Cell}:nth-child(8) {
        background-color: #b2d5ef;
      }
    `}
`;

const ScrollTrack = styled.div`
  display: flex;
  flex: ${(props) => (props.$vertical ? 'none' : '1')};
  flex-direction: ${(props) => (props.$vertical ? 'column' : 'row')};
  width: ${(props) => (props.$vertical ? '17px' : 'auto')};
  background: #e8e8e8;
`;

const ScrollArrow = styled(PlainButton)`
  justify-content: center;
  min-width: 17px;
  min-height: 17px;
`;

const ScrollRail = styled.div`
  display: flex;
  flex: 1;
  padding: ${(props) => (props.$vertical ? '0 2px' : '3px 0')};
`;

const ScrollThumb = styled.div`
  width: ${(props) => (props.$vertical ? '100%' : `${props.$size}%`)};
  height: ${(props) => (props.$vertical ? `${props.$size}%` : '100%')};
  border-radius: 7px;
  background: #bfbfbf;
`;

const BottomScroll = styled.div`
  display: flex;
  height: 18px;
`;

const ScrollCorner = styled.div`
  width: 17px;
  background: #dcdcdc;
`;

const DetailTabs = styled.div`
  display: flex;
  gap: 4px;
  height: 38px;
  padding: 7px 10px 0;
  border-bottom: 1px solid ${LINE};
`;

const DetailTab = styled.button`
  padding: 0 18px;
  border: 0;
  border-radius: 3px 3px 0 0;
  background: ${(props) => (props.$active ? BLUE : '#bfbfbf')};
  color: ${(props) => (props.$active ? '#fff' : '#333')};
  font-weight: ${(props) => (props.$active ? 700 : 400)};
`;

const DetailBody = styled.div`
  display: flex;
  height: 274px;
  background: #fff;
`;

const Status = styled.footer`
  display: flex;
  align-items: center;
  height: 40px;
  padding-bottom: 2px;
  border-top: 1px solid #dcdcdc;
  color: #333;
`;

const StatusText = styled.span`
  padding: 0 34px 0 20px;
  border-right: 1px solid #a9b4c4;

  &:first-child {
    padding-left: 13px;
  }
`;

const Totals = styled.div`
  display: flex;
  gap: 10px;
  margin: 0 20px 0 auto;
`;

const ViewButton = styled(PlainButton)`
  justify-content: center;
  width: 28px;
  height: 28px;
  border: 1px solid ${(props) => (props.$on ? '#dcdcdc' : 'transparent')};
  border-radius: 3px;
  background: ${(props) => (props.$on ? '#fff' : 'none')};
`;

const LayoutButtons = styled.div`
  display: flex;
  gap: 6px;
`;

const Divider = styled.div`
  width: 1px;
  height: 30px;
  margin: 0 12px;
  background: #b8b8b8;
`;

const Percent = styled.span`
  padding: 0 14px 0 18px;
`;

const ZoomSlider = styled.input`
  width: 134px;
  height: 16px;
  margin: 0 7px 0 12px;
  appearance: none;
  background: linear-gradient(#c8c8c8, #c8c8c8) center / 100% 2px no-repeat;

  &::-webkit-slider-thumb {
    width: 15px;
    height: 15px;
    border: 1px solid #666;
    border-radius: 50%;
    appearance: none;
    background: #fff;
  }
`;

const ZoomIn = styled(PlainButton)`
  justify-content: center;
  width: 28px;
  height: 28px;
  border: 1px solid #dcdcdc;
  border-radius: 3px;
  background: #e8e8e8;
`;

const TaskStrip = styled.div`
  display: flex;
  height: 4px;
  padding: 1px 0 0 60px;
  background: #d0d0d0;
`;

const TaskWindow = styled.div`
  width: 360px;
  background: #fff;
`;
